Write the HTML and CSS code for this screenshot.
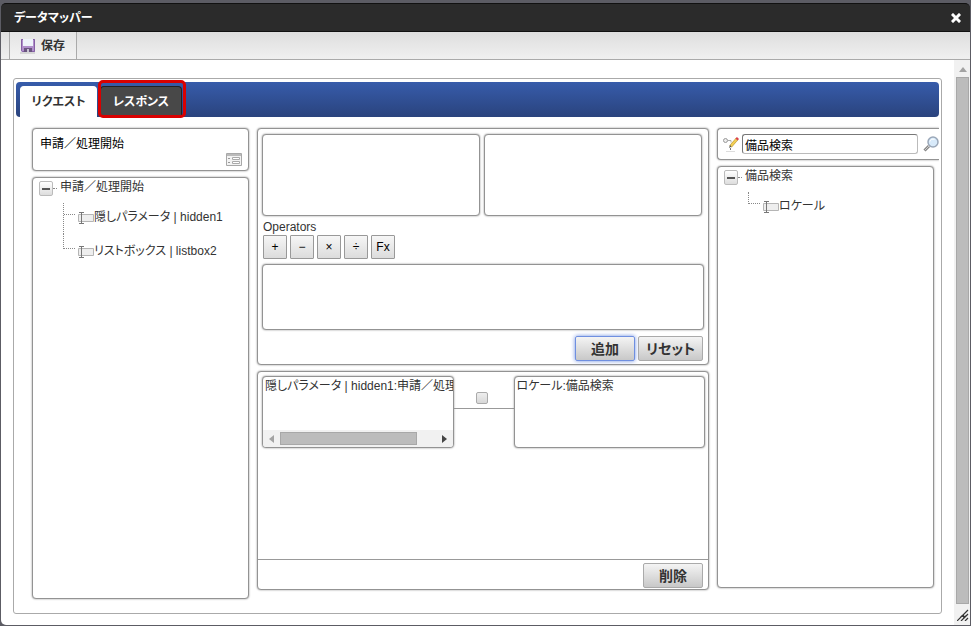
FILE: index.html
```html
<!DOCTYPE html>
<html lang="ja">

<head>
    <meta charset="utf-8">
    <title>データマッパー</title>
    <link rel="stylesheet" href="styles.css">
</head>

<body>
    <div class="window">
        <header class="title-bar">
            <h1>データマッパー</h1>
            <button type="button" class="close" aria-label="閉じる">
                <svg width="10" height="10" viewBox="0 0 10 10"><path d="M2 2l6 6M8 2l-6 6" stroke="#fff" stroke-width="3" stroke-linecap="square" /></svg>
            </button>
        </header>

        <div class="toolbar">
            <button type="button" class="save">
                <svg width="16" height="16" viewBox="0 0 16 16">
                    <path d="M0 15h15" stroke="#bbb" />
                    <path d="M1 1h14v13H2L1 13z" fill="#b08fcb" />
                    <path d="M1.500 1.500h13v12H2.500l-1-1z" fill="none" stroke="#8560a5" />
                    <path d="M3 1h10v7H3z" fill="#eef3fa" />
                    <path d="M4 10h8v4H4z" fill="#6a5580" />
                    <path d="M7 11h2v3H7z" fill="#c9c3d4" />
                </svg>
                保存
            </button>
        </div>

        <div class="content">
            <main class="mapper">
                <nav class="tabs">
                    <button type="button" class="tab active">リクエスト</button>
                    <button type="button" class="tab marked">レスポンス</button>
                </nav>

                <div class="columns">
                    <section class="column source">
                        <div class="box source-head">
                            <p>申請／処理開始</p>
                            <svg width="16" height="14" viewBox="0 0 16 14">
                                <path d="M.5.5h15v12H.5z" fill="#f3f3f3" stroke="#a8a8a8" />
                                <path d="M1 1h14v2H1z" fill="#bbb" />
                                <path d="M2 5.500h2M2 9.500h2" stroke="#999" />
                                <path d="M6.500 4.500h7v2h-7zM6.500 8.500h7v2h-7z" fill="#fff" stroke="#aaa" />
                            </svg>
                        </div>
                        <div class="box tree source-tree">
                            <div class="root">
                                <button type="button" class="toggle" aria-label="折りたたむ"></button>
                                <span>申請／処理開始</span>
                            </div>
                            <ul>
                                <li>
                                    <span class="branch"></span>
                                    <svg width="16" height="13" viewBox="0 0 16 13"><path d="M.5 3.500h15v7H.5z" fill="#eee" stroke="#b5b5b5" /><path d="M1 1.500h5M1 12.500h5M3.500 2v10" stroke="#777" /></svg>
                                    <span>隠しパラメータ | hidden1</span>
                                </li>
                                <li>
                                    <span class="branch"></span>
                                    <svg width="16" height="13" viewBox="0 0 16 13"><path d="M.5 3.500h15v7H.5z" fill="#eee" stroke="#b5b5b5" /><path d="M1 1.500h5M1 12.500h5M3.500 2v10" stroke="#777" /></svg>
                                    <span>リストボックス | listbox2</span>
                                </li>
                            </ul>
                        </div>
                    </section>

                    <section class="column">
                        <div class="box editor">
                            <div class="operands">
                                <div class="box operand"></div>
                                <div class="box operand"></div>
                            </div>
                            <p class="operators-label">Operators</p>
                            <div class="operators">
                                <button type="button">+</button>
                                <button type="button">−</button>
                                <button type="button">×</button>
                                <button type="button">÷</button>
                                <button type="button">Fx</button>
                            </div>
                            <div class="box expression"></div>
                            <div class="actions">
                                <button type="button" class="btn focused">追加</button>
                                <button type="button" class="btn">リセット</button>
                            </div>
                        </div>

                        <div class="box mappings">
                            <div class="mapping">
                                <div class="box mapping-from">
                                    <p>隠しパラメータ | hidden1:申請／処理開始</p>
                                    <div class="h-scroll">
                                        <svg width="5" height="8" viewBox="0 0 5 8"><path d="M5 0v8L0 4z" fill="#a3a3a3" /></svg>
                                        <div class="h-track"><div class="h-thumb"></div></div>
                                        <svg width="5" height="8" viewBox="0 0 5 8"><path d="M0 0v8l5-4z" fill="#444" /></svg>
                                    </div>
                                </div>
                                <div class="link">
                                    <input type="checkbox" aria-label="マッピングを選択">
                                </div>
                                <div class="box mapping-to">
                                    <p>ロケール:備品検索</p>
                                </div>
                            </div>
                            <div class="actions delete-row">
                                <button type="button" class="btn">削除</button>
                            </div>
                        </div>
                    </section>

                    <section class="column target">
                        <div class="box search">
                            <svg width="18" height="16" viewBox="0 0 18 16">
                                <circle cx="3.500" cy="4.500" r="2" fill="#eee" stroke="#999" />
                                <path d="M6 4.500h3v2" fill="none" stroke="#aaa" />
                                <path d="M8.500 9v6" stroke="#777" stroke-dasharray="2 1" />
                                <path d="M4 15.500h9" stroke="#ddd" />
                                <path d="M8.500 10.500L15 3" stroke="#b8973a" stroke-width="3" />
                                <path d="M8.500 10.500L15 3" stroke="#f2cf55" stroke-width="2" />
                                <path d="M14.500 3.500L16 2" stroke="#d9434e" stroke-width="3" />
                                <path d="M7 12l1-3 1.500 1.500z" fill="#555" />
                            </svg>
                            <input type="text" value="備品検索" aria-label="検索">
                            <svg width="16" height="16" viewBox="0 0 16 16">
                                <path d="M1.500 14.500L6 10" stroke="#888" stroke-width="3" />
                                <path d="M2 14l4-4" stroke="#ccc" />
                                <circle cx="10" cy="6" r="5" fill="#d8eafa" stroke="#9aa7b8" stroke-width="1.500" />
                                <path d="M7 5.500c.5-2 2.500-3 4.500-2" fill="none" stroke="#fff" />
                            </svg>
                        </div>
                        <div class="box tree target-tree">
                            <div class="root">
                                <button type="button" class="toggle" aria-label="折りたたむ"></button>
                                <span>備品検索</span>
                            </div>
                            <ul>
                                <li>
                                    <span class="branch"></span>
                                    <svg width="16" height="13" viewBox="0 0 16 13"><path d="M.5 3.500h15v7H.5z" fill="#eee" stroke="#b5b5b5" /><path d="M1 1.500h5M1 12.500h5M3.500 2v10" stroke="#777" /></svg>
                                    <span>ロケール</span>
                                </li>
                            </ul>
                        </div>
                    </section>
                </div>
            </main>

            <div class="v-scroll">
                <svg width="8" height="5" viewBox="0 0 8 5"><path d="M0 5h8L4 0z" fill="#a3a3a3" /></svg>
                <div class="v-thumb"></div>
                <svg width="12" height="12" viewBox="0 0 12 12"><path d="M0 12L11 1M4 12l7-7M8 12l3-3" stroke="#333" stroke-width="1.200" /><path d="M3 7.500l3.500-2 1 1.500 3-1-3.500 3.500-1-1.500z" fill="#333" /></svg>
            </div>
        </div>
    </div>
</body>

</html>
```

FILE: styles.css
```css
* {
    box-sizing: border-box;
}

body {
    margin: 0;
    background-color: #5c5c64;
    color: #333;
    font-family: "Liberation Sans", "Noto Sans CJK JP", sans-serif;
    font-size: 12px;
    line-height: 16px;
    font-feature-settings: "palt";
}

button,
input {
    font: inherit;
    font-feature-settings: inherit;
    color: inherit;
}

p,
h1,
ul {
    margin: 0;
    padding: 0;
}

svg {
    display: block;
    flex: none;
}

.window {
    display: flex;
    flex-direction: column;
    min-height: 100vh;
    padding: 3px 1px 1px;
}

.title-bar {
    display: flex;
    align-items: center;
    justify-content: space-between;
    height: 29px;
    padding: 0 9px 0 13px;
    background-color: #2b2b2b;
    border: 1px solid #111;
    border-width: 1px 0;
    border-radius: 5px 5px 0 0;
    color: #fff;
}

.title-bar h1 {
    font-size: 12px;
    line-height: 16px;
}

.close {
    padding: 0;
    border: none;
    background: none;
}

.toolbar {
    display: flex;
    height: 28px;
    padding-left: 8px;
    background: linear-gradient(#dedede, #f0f0f0);
    border-bottom: 1px solid #aaa;
}

.save {
    display: flex;
    align-items: center;
    gap: 5px;
    padding: 0 11px 0 10px;
    border: 1px solid #aaa;
    border-width: 0 1px;
    background: linear-gradient(#e4e4e4, #f3f3f3);
    font-weight: bold;
}

.content {
    display: flex;
    flex: 1;
    background-color: #fff;
    border-radius: 0 0 5px 5px;
}

.mapper {
    flex: 1;
    min-width: 0;
    margin: 18px 12px 11px;
    padding: 3px 2px 14px;
    border: 1px solid #aaa;
    border-radius: 3px;
}

.tabs {
    display: flex;
    gap: 3px;
    height: 35px;
    padding: 4px 4px 0;
    background: linear-gradient(#375cab, #2a437d);
    border-radius: 4px;
}

.tab {
    position: relative;
    width: 82px;
    padding: 0;
    border: 1px solid #222;
    border-bottom: none;
    border-radius: 4px 4px 0 0;
    background-color: #484848;
    color: #fff;
    font-weight: bold;
}

.tab.active {
    width: 77px;
    background-color: #fff;
    border-color: #fff;
    color: #333;
}

.marked::after {
    content: "";
    position: absolute;
    inset: -7px -5px -1px -3px;
    border: 3px solid #d90000;
    border-radius: 5px;
}

.columns {
    display: grid;
    grid-template-columns: 217fr 452fr 222fr;
    align-items: start;
    gap: 8px;
    padding: 11px 0 0 16px;
}

.column {
    display: flex;
    flex-direction: column;
    gap: 6px;
    min-width: 0;
}

.box {
    border: 1px solid #939393;
    border-radius: 4px;
    box-shadow: 0 0 2px #888;
    background-color: #fff;
}

.source-head {
    height: 43px;
    padding: 7px 6px 4px 7px;
    color: #000;
}

.source-head svg {
    margin: 1px 0 0 auto;
}

.tree {
    padding-left: 6px;
}

.source-tree {
    min-height: 422px;
}

.root {
    display: flex;
    gap: 7px;
    padding-top: 1px;
}

.toggle {
    position: relative;
    width: 14px;
    height: 15px;
    margin-top: 2px;
    padding: 0;
    border: 1px solid #bbb;
    border-radius: 2px;
    background: linear-gradient(#fff, #ddd);
}

.toggle::before {
    content: "";
    display: block;
    height: 2px;
    margin: 0 2px;
    background-color: #555;
}

/* dotted stub towards the label */
.toggle::after {
    content: "";
    position: absolute;
    top: 6px;
    left: 13px;
    width: 4px;
    border-top: 1px dotted #888;
}

.tree ul {
    margin-top: 4px;
    padding-left: 24px;
    list-style: none;
}

.tree li {
    display: flex;
    align-items: center;
    height: 34px;
}

.tree li svg {
    margin-left: 3px;
}

.branch {
    align-self: stretch;
    width: 12px;
    border-left: 1px dotted #888;
}

.branch::after {
    content: "";
    display: block;
    height: 14px;
    border-bottom: 1px dotted #888;
}

.tree li:first-child .branch {
    margin-top: 3px;
}

.tree li:first-child .branch::after {
    height: 11px;
}

.tree li:last-child .branch {
    align-self: flex-start;
}

.editor {
    height: 237px;
    padding: 5px 4px 0;
}

.operands {
    display: flex;
    gap: 4px;
    padding-right: 2px;
}

.operand {
    flex: 1;
    height: 82px;
}

.operators-label {
    margin-top: 3px;
    padding-left: 1px;
}

.operators {
    display: flex;
    gap: 3px;
    padding-left: 1px;
}

.operators button {
    width: 24px;
    height: 24px;
    padding: 0;
    border: 1px solid #999;
    border-radius: 1px;
    background: linear-gradient(#f6f6f6, #dcdcdc);
    color: #000;
}

.expression {
    height: 66px;
    margin-top: 5px;
}

.actions {
    display: flex;
    justify-content: flex-end;
    gap: 3px;
    margin-top: 6px;
    padding-right: 1px;
}

.btn {
    min-width: 60px;
    height: 25px;
    padding: 0 7px;
    border: 1px solid #aaa;
    border-radius: 2px;
    background: linear-gradient(#f4f4f4, #c8c8c8);
    font-size: 14px;
    font-weight: bold;
}

.btn.focused {
    border-color: #6f8fe0;
    box-shadow: 0 0 4px #6f8fe0;
}

.mappings {
    padding-top: 4px;
}

.mapping {
    display: flex;
    min-height: 183px;
    padding: 0 3px 0 4px;
}

.mapping-from,
.mapping-to {
    display: flex;
    flex: 1;
    flex-direction: column;
    justify-content: space-between;
    min-width: 0;
    height: 72px;
    padding-top: 1px;
    overflow: hidden;
}

.mapping p {
    padding-left: 2px;
    white-space: nowrap;
}

.h-scroll {
    display: flex;
    align-items: center;
    gap: 6px;
    height: 17px;
    padding: 0 6px;
    background-color: #f1f1f1;
}

.h-track {
    flex: 1;
}

.h-thumb {
    width: 88%;
    height: 13px;
    background-color: #bcbcbc;
    border: 1px solid #a8a8a8;
}

.link {
    width: 60px;
    height: 33px;
    padding: 16px 4px 0 0;
    border-bottom: 1px solid #999;
}

.link input {
    display: block;
    appearance: none;
    width: 12px;
    height: 12px;
    margin: 0 auto;
    border: 1px solid #aaa;
    border-radius: 2px;
    background: linear-gradient(#eee, #d8d8d8);
}

.delete-row {
    margin-top: 0;
    padding: 3px 5px 1px;
    border-top: 1px solid #999;
}

.target {
    overflow: hidden;
    margin: -2px 0 -2px -2px;
    padding: 2px 0 2px 2px;
}

.search {
    display: flex;
    align-items: center;
    height: 32px;
    padding: 0 0 0 4px;
    border-right: none;
    border-radius: 4px 0 0 4px;
}

.search input {
    flex: 1;
    min-width: 0;
    height: 20px;
    margin: 0 5px 0 2px;
    padding: 0 2px;
    border: 1px solid #bbb;
    border-top-color: #777;
    border-left-color: #777;
    border-radius: 3px;
    line-height: 16px;
    color: #000;
}

.target-tree {
    min-height: 422px;
    margin-right: 5px;
}

.v-scroll {
    display: flex;
    flex-direction: column;
    align-items: center;
    width: 16px;
    padding: 7px 1px 4px 2px;
    background-color: #f1f1f1;
}

.v-thumb {
    flex: 1;
    align-self: stretch;
    margin: 5px 0;
    background-color: #bcbcbc;
    border: 1px solid #a8a8a8;
}
```
